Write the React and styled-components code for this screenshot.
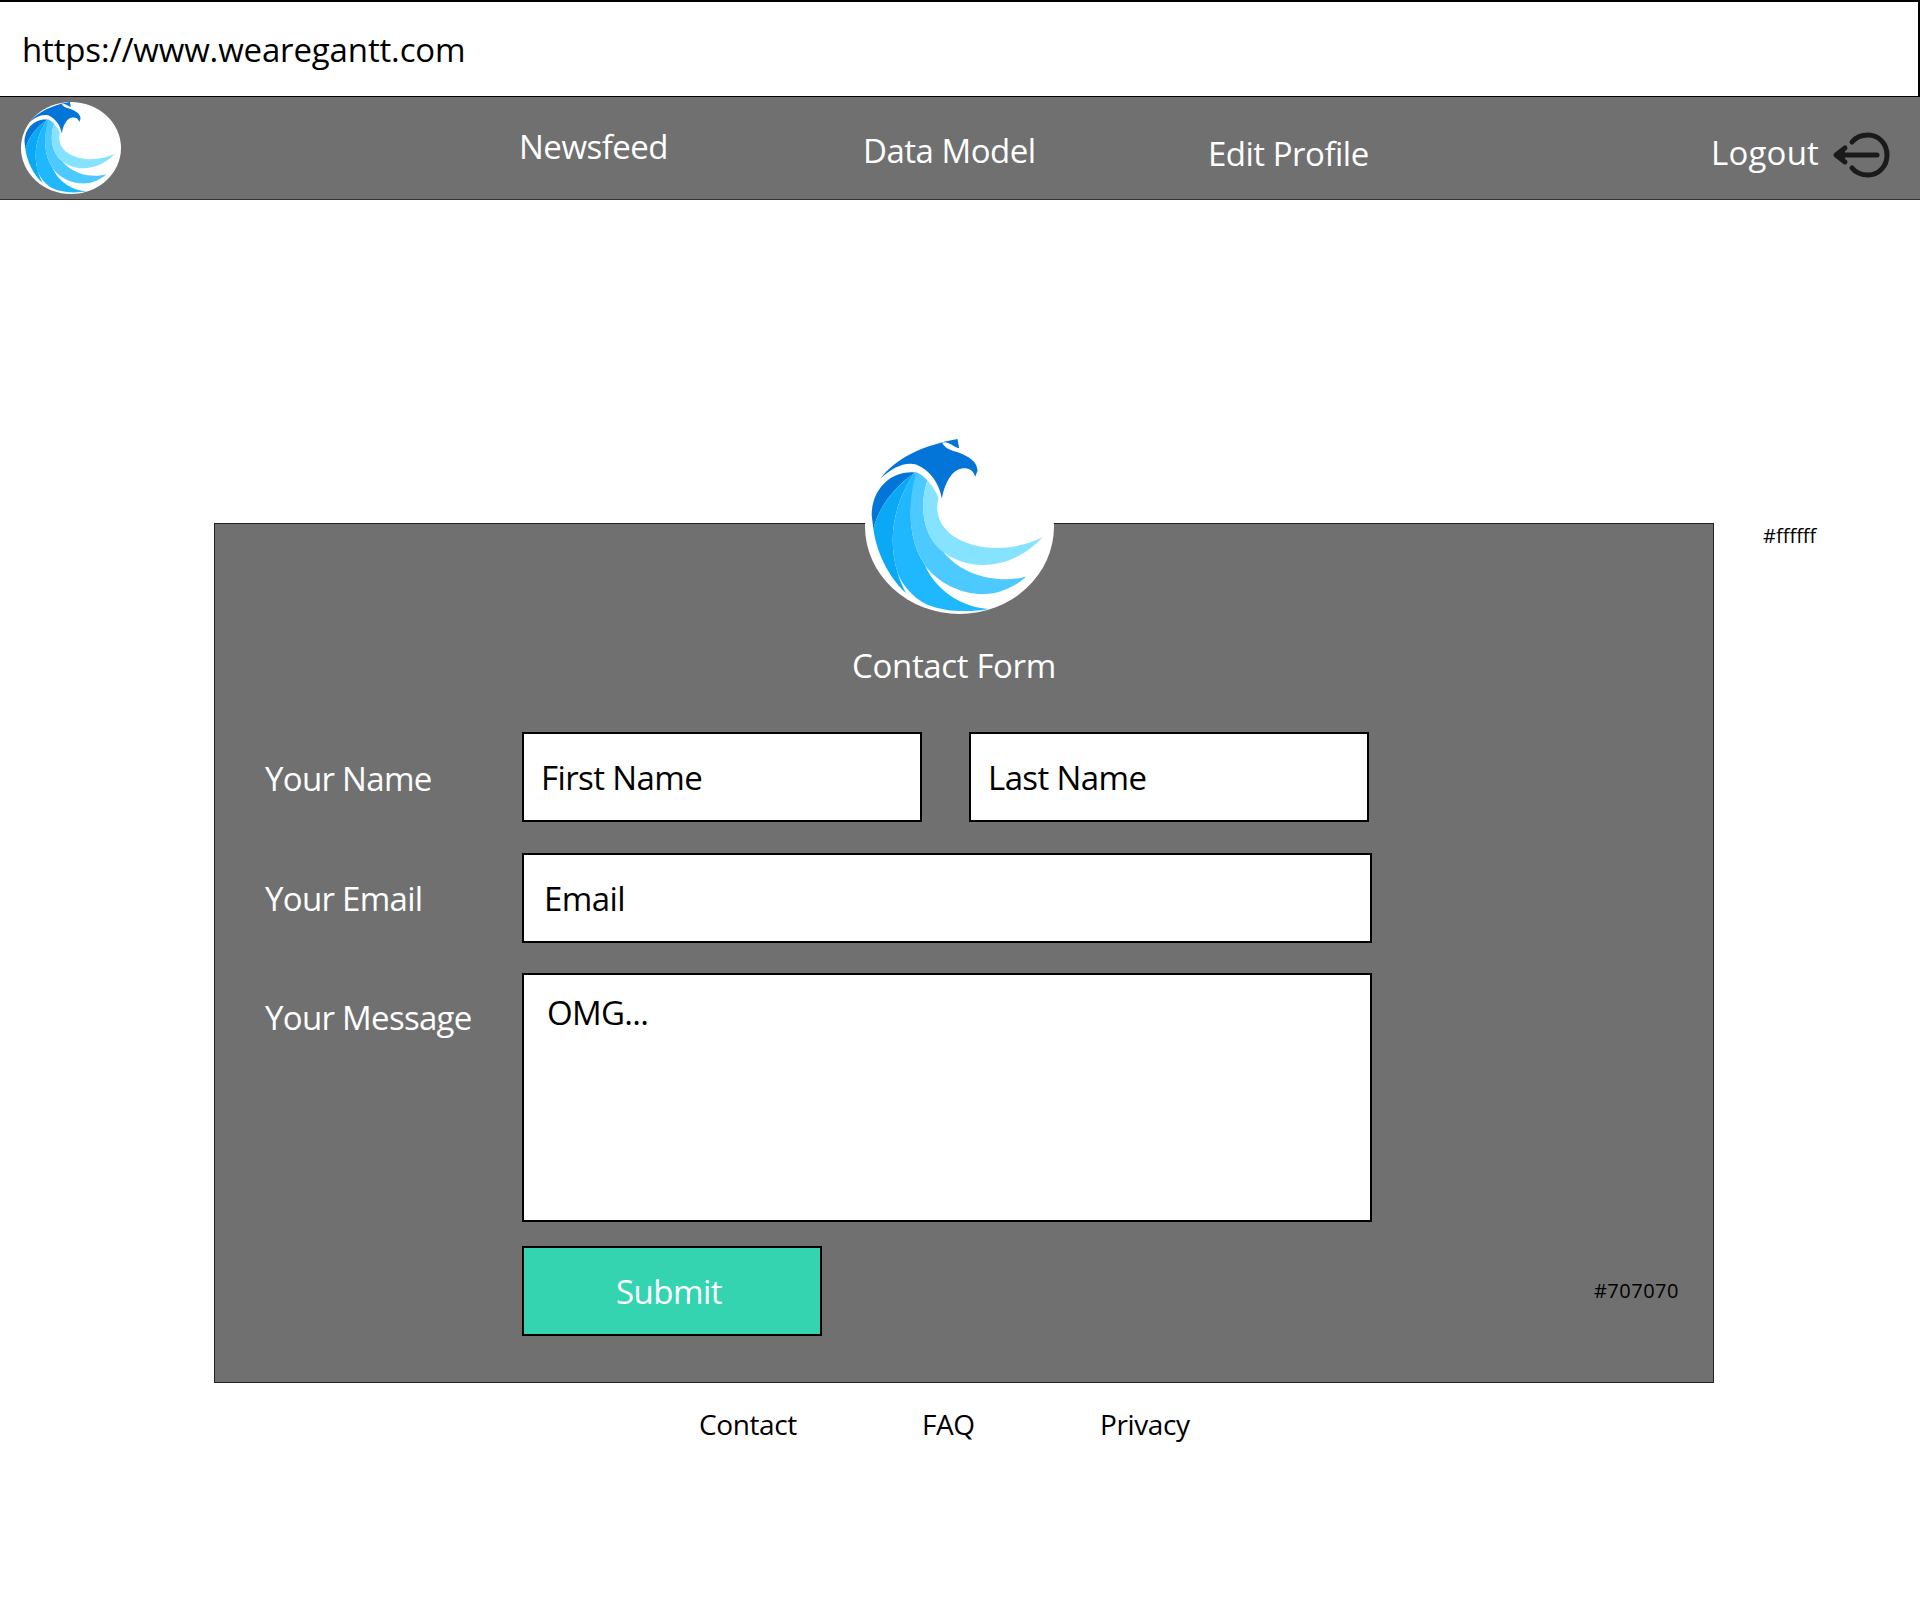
import React from "react";
import styled, { createGlobalStyle } from "styled-components";

const Global = createGlobalStyle`
  html, body { margin: 0; padding: 0; background: #fff; }
  body { font-family: "Open Sans", "Noto Sans", sans-serif; color: #000; }
  * { box-sizing: border-box; }
`;

const Page = styled.div`
  width: 1920px;
  height: 1600px;
  overflow: hidden;
  background: #fff;
`;

const AddressBar = styled.div`
  height: 96px;
  border-top: 2px solid #000;
  border-right: 2px solid #000;
  padding: 26px 0 0 22px;
  font-size: 33px;
  line-height: 44px;
  letter-spacing: -0.15px;
`;

const NavBar = styled.nav`
  height: 104px;
  background: #707070;
  border-top: 1px solid #000;
  border-bottom: 1px solid #333;
  display: grid;
  grid-template-columns: 519px 344px 345px 503px auto;
  color: #fff;
`;

const NavBrand = styled.div`
  padding: 5px 0 0 21px;
`;

const NavLink = styled.a`
  font-size: 33px;
  line-height: 44px;
  letter-spacing: ${(p) => p.$spacing ?? -0.5}px;
  margin-top: ${(p) => p.$top}px;
`;

const LogoutGroup = styled.div`
  display: flex;
  align-items: flex-start;
  gap: 12px;
  margin-top: 34px;
`;

const LogoutIcon = styled.svg`
  width: 60px;
  height: 50px;
`;

const Main = styled.main`
  display: flex;
  align-items: flex-start;
  padding: 323px 0 0 214px;
`;

const Panel = styled.section`
  position: relative;
  width: 1500px;
  height: 860px;
  background: #707070;
  border: 1px solid #222;
  padding: 120px 0 0 50px;
  color: #fff;
`;

const FloatingLogo = styled.div`
  position: absolute;
  left: 650px;
  top: -85px;
  line-height: 0;
`;

const Title = styled.h1`
  margin: 0 0 44px;
  padding-right: 70px;
  text-align: center;
  font-size: 33px;
  font-weight: 400;
  line-height: 44px;
  letter-spacing: -0.35px;
`;

const Row = styled.div`
  display: grid;
  grid-template-columns: 257px 851px;
  margin-bottom: ${(p) => p.$gap}px;
`;

const Label = styled.label`
  font-size: 33px;
  line-height: 44px;
  letter-spacing: -0.7px;
  padding-top: ${(p) => p.$top}px;
`;

const NameFields = styled.div`
  display: flex;
  gap: 47px;
`;

const TextBox = styled.input`
  display: block;
  width: ${(p) => p.$width}px;
  height: 90px;
  background: #fff;
  border: 2px solid #000;
  border-radius: 0;
  outline: none;
  padding: 0 0 0 ${(p) => p.$pad}px;
  font-family: inherit;
  font-size: 33px;
  letter-spacing: -0.6px;
  color: #000;
`;

const MessageBox = styled.textarea`
  display: block;
  width: 850px;
  height: 249px;
  background: #fff;
  border: 2px solid #000;
  border-radius: 0;
  outline: none;
  resize: none;
  padding: 16px 0 0 23px;
  font-family: inherit;
  font-size: 33px;
  line-height: 44px;
  letter-spacing: -0.7px;
  color: #000;
`;

const SubmitRow = styled.div`
  display: flex;
  align-items: center;
  justify-content: space-between;
  padding: 0 34px 0 257px;
`;

const SubmitButton = styled.button`
  width: 300px;
  height: 90px;
  background: #35d4b0;
  border: 2px solid #000;
  color: #fff;
  font-family: inherit;
  font-size: 33px;
  letter-spacing: -0.5px;
  padding: 0 6px 0 0;
`;

const ColorNote = styled.span`
  font-size: 20px;
  line-height: 28px;
  color: #000;
  letter-spacing: ${(p) => p.$spacing ?? 0}px;
`;

const SideNote = styled(ColorNote)`
  margin: -1px 0 0 49px;
`;

const FooterNav = styled.footer`
  display: grid;
  grid-template-columns: 223px 178px auto;
  padding: 22px 0 0 699px;
  font-size: 28px;
  line-height: 38px;
  letter-spacing: -0.4px;
`;

function Logo({ width, height }) {
  return (
    <svg width={width} height={height} viewBox="75 57 566 523" preserveAspectRatio="none">
      <ellipse cx="358" cy="318.5" rx="283" ry="261.5" fill="#fff" />
      <path
        d="M122 175 C165 115 250 75 352 57 L357 85 C340 80 325 64 305 66 C312 85 335 92 355 97 C385 108 412 125 412 152 L405 170 C400 150 385 143 365 145 C335 150 315 185 305 235 C298 190 270 150 228 133 C190 125 155 145 122 175 Z"
        fill="#0475d8"
      />
      <path d="M225 157 C150 150 95 210 95 285 L100 325 C120 250 170 195 225 157 Z" fill="#0475d8" />
      <path
        d="M225 157 C170 195 120 250 100 325 C110 400 150 475 198 517 C185 495 178 475 172 455 C140 350 165 240 225 157 Z"
        fill="#0aa8f5"
      />
      <path
        d="M225 157 C165 240 140 350 172 455 C185 490 215 530 262 552 C320 575 390 575 446 565 C370 560 290 515 255 435 C205 360 200 260 232 157 Z"
        fill="#1fb8ff"
      />
      <path
        d="M228 157 C200 260 205 360 255 435 C300 495 380 530 460 518 C500 510 535 490 558 468 C480 490 370 470 310 395 C250 350 235 260 262 180 C250 168 240 160 228 157 Z"
        fill="#4cc9ff"
      />
      <path
        d="M262 180 C235 260 250 350 310 395 C380 450 510 455 608 350 C520 395 400 395 330 340 C295 310 285 270 295 235 C290 215 275 195 262 180 Z"
        fill="#85e3ff"
      />
    </svg>
  );
}

export default function App() {
  return (
    <Page>
      <Global />
      <AddressBar>https://www.wearegantt.com</AddressBar>
      <NavBar>
        <NavBrand>
          <Logo width={100} height={92} />
        </NavBrand>
        <NavLink $top={28}>Newsfeed</NavLink>
        <NavLink $top={32}>Data Model</NavLink>
        <NavLink $top={35}>Edit Profile</NavLink>
        <LogoutGroup>
          <NavLink $top={0} $spacing={0.2}>Logout</NavLink>
          <LogoutIcon viewBox="0 0 60 50">
            <g fill="none" stroke="#1a1a1a" strokeWidth="5" strokeLinecap="round" strokeLinejoin="round">
              <path d="M21 11 C25 6 31 4 37 4 C48 4 56 13 56 24 C56 35 48 44 37 44 C31 44 25 42 21 37" />
              <path d="M6 24 H46" />
              <path d="M14 17 L5 24 L14 31" fill="#1a1a1a" />
            </g>
          </LogoutIcon>
        </LogoutGroup>
      </NavBar>
      <Main>
        <Panel>
          <FloatingLogo>
            <Logo width={189} height={175} />
          </FloatingLogo>
          <Title>Contact Form</Title>
          <Row $gap={31}>
            <Label $top={25}>Your Name</Label>
            <NameFields>
              <TextBox $width={400} $pad={17} defaultValue="First Name" readOnly />
              <TextBox $width={400} $pad={17} defaultValue="Last Name" readOnly />
            </NameFields>
          </Row>
          <Row $gap={30}>
            <Label $top={24}>Your Email</Label>
            <TextBox $width={850} $pad={20} defaultValue="Email" readOnly />
          </Row>
          <Row $gap={24}>
            <Label $top={23}>Your Message</Label>
            <MessageBox defaultValue="OMG..." readOnly />
          </Row>
          <SubmitRow>
            <SubmitButton>Submit</SubmitButton>
            <ColorNote $spacing={0.5}>#707070</ColorNote>
          </SubmitRow>
        </Panel>
        <SideNote>#ffffff</SideNote>
      </Main>
      <FooterNav>
        <a>Contact</a>
        <a>FAQ</a>
        <a>Privacy</a>
      </FooterNav>
    </Page>
  );
}
